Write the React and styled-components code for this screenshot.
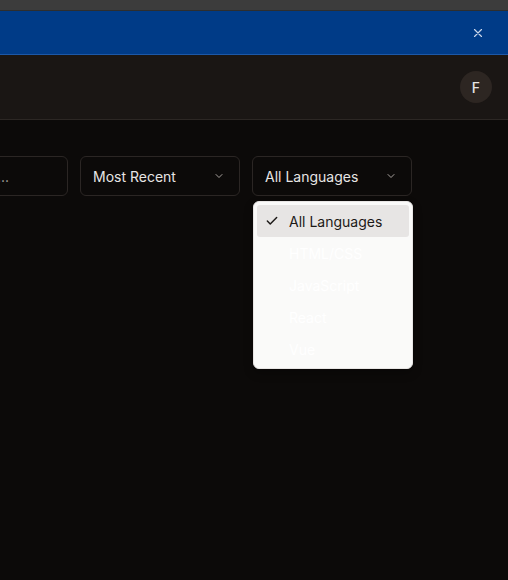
import React from "react";
import styled, { createGlobalStyle } from "styled-components";

const GlobalStyle = createGlobalStyle`
    html, body {
        margin: 0;
        padding: 0;
        background: #0c0a09;
        font-family: Inter, "Liberation Sans", sans-serif;
    }
    * { box-sizing: border-box; }
`

const Page = styled.div`
    width: 508px;
    height: 580px;
    overflow: hidden;
    background: #0c0a09;
    display: flex;
    flex-direction: column;
`

const TopStrip = styled.div`
    height: 11px;
    background: #3c3c3c;
    border-bottom: 1px solid #2e2e2e;
`

const Banner = styled.div`
    height: 44px;
    background: #003b87;
    border-bottom: 1px solid #1c58a8;
    display: flex;
    align-items: center;
    justify-content: flex-end;
    padding-right: 23px;
`

const CloseButton = styled.button`
    background: none;
    border: none;
    padding: 0;
    width: 14px;
    height: 14px;
    display: flex;
    align-items: center;
    justify-content: center;
    color: #c9d6ea;
    cursor: pointer;
`

const Header = styled.header`
    height: 65px;
    background: #1a1614;
    border-bottom: 1px solid #2c2724;
    display: flex;
    align-items: center;
    justify-content: flex-end;
    padding-right: 16px;
`

const Avatar = styled.div`
    width: 32px;
    height: 32px;
    border-radius: 50%;
    background: #2d2622;
    color: #e7e5e4;
    font-size: 14px;
    font-weight: 500;
    display: flex;
    align-items: center;
    justify-content: center;
`

const Filters = styled.div`
    display: flex;
    justify-content: flex-end;
    gap: 12px;
    padding: 36px 96px 0 0;
`

const SearchBox = styled.div`
    flex: 0 0 240px;
    height: 40px;
    border: 1px solid #2b2624;
    border-radius: 6px;
    display: flex;
    align-items: center;
    justify-content: flex-end;
    padding-right: 58px;
    color: #a8a29e;
    font-size: 14px;
    white-space: nowrap;
    overflow: hidden;
`

const SelectWrap = styled.div`
    position: relative;
    flex: 0 0 160px;
`

const SelectTrigger = styled.div`
    height: 40px;
    border: 1px solid #2b2624;
    border-radius: 6px;
    display: flex;
    align-items: center;
    justify-content: space-between;
    padding: 0 14px 0 12px;
    color: #e7e5e4;
    font-size: 14px;
`

const Menu = styled.div`
    position: absolute;
    top: 45px;
    left: 1px;
    width: 160px;
    background: #fafaf9;
    border: 1px solid #e7e5e4;
    border-radius: 6px;
    padding: 3px;
    display: flex;
    flex-direction: column;
    box-shadow: 0 4px 10px rgba(0, 0, 0, 0.3);
`

const MenuItem = styled.div`
    height: 32px;
    border-radius: 3px;
    display: flex;
    align-items: center;
    padding-left: 32px;
    position: relative;
    font-size: 14px;
    color: ${({ $active }) => ($active ? "#1c1917" : "#ffffff")};
    background: ${({ $active }) => ($active ? "#e7e5e4" : "transparent")};
`

const Check = styled.span`
    position: absolute;
    left: 8px;
    top: 9px;
    display: flex;
`

const Chevron = () => (
    <svg width="12" height="12" viewBox="0 0 24 24" fill="none" stroke="#a8a29e" strokeWidth="2" strokeLinecap="round" strokeLinejoin="round">
        <path d="m6 9 6 6 6-6" />
    </svg>
)

const languages = ["All Languages", "HTML/CSS", "JavaScript", "React", "Vue"]

const App = () => {
    return (
        <>
        <GlobalStyle />
        <Page>
            <TopStrip />
            <Banner>
                <CloseButton aria-label="Close">
                    <svg width="14" height="14" viewBox="0 0 24 24" fill="none" stroke="currentColor" strokeWidth="2" strokeLinecap="round">
                        <path d="M18 6 6 18M6 6l12 12" />
                    </svg>
                </CloseButton>
            </Banner>
            <Header>
                <Avatar>F</Avatar>
            </Header>
            <Filters>
                <SearchBox>Search repositories...</SearchBox>
                <SelectWrap>
                    <SelectTrigger>
                        Most Recent
                        <Chevron />
                    </SelectTrigger>
                </SelectWrap>
                <SelectWrap>
                    <SelectTrigger>
                        All Languages
                        <Chevron />
                    </SelectTrigger>
                    <Menu>
                        {languages.map((lang, i) => (
                            <MenuItem key={lang} $active={i === 0}>
                                {i === 0 && (
                                    <Check>
                                        <svg width="14" height="14" viewBox="0 0 24 24" fill="none" stroke="#1c1917" strokeWidth="2.5" strokeLinecap="round" strokeLinejoin="round">
                                            <path d="M20 6 9 17l-5-5" />
                                        </svg>
                                    </Check>
                                )}
                                {lang}
                            </MenuItem>
                        ))}
                    </Menu>
                </SelectWrap>
            </Filters>
        </Page>
        </>
    )
}

export default App
